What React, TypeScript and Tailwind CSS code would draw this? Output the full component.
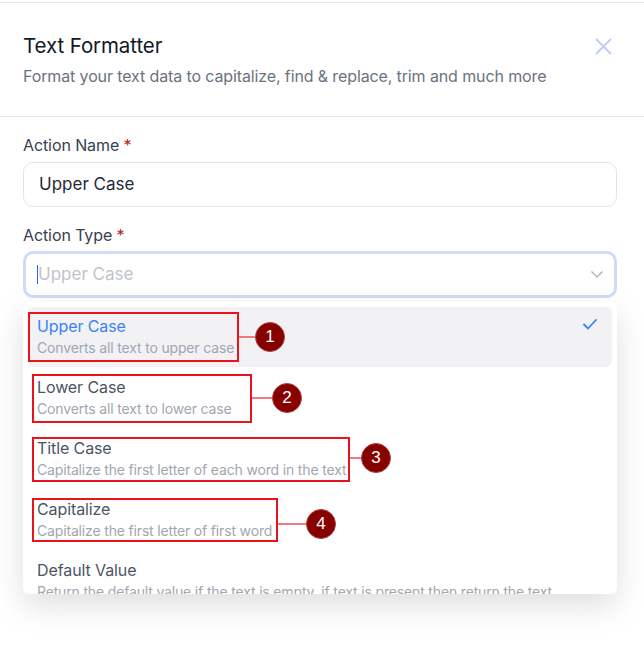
import * as React from 'react';

interface Option {
    title: string;
    description: string;
}

const options: Option[] = [
    { title: 'Upper Case', description: 'Converts all text to upper case' },
    { title: 'Lower Case', description: 'Converts all text to lower case' },
    { title: 'Title Case', description: 'Capitalize the first letter of each word in the text' },
    { title: 'Capitalize', description: 'Capitalize the first letter of first word' },
    { title: 'Default Value', description: 'Return the default value if the text is empty, if text is present then return the text' },
];

// red callouts drawn over the screenshot
const callouts = [
    { n: 1, box: 'left-[28px] top-[312px] w-[211px] h-[50px]', line: 'left-[239px] top-[336px] w-[18px]', dot: 'left-[255px] top-[322px]' },
    { n: 2, box: 'left-[32px] top-[374px] w-[220px] h-[49px]', line: 'left-[252px] top-[397px] w-[22px]', dot: 'left-[272px] top-[383px]' },
    { n: 3, box: 'left-[32px] top-[437px] w-[318px] h-[45px]', line: 'left-[350px] top-[457px] w-[12px]', dot: 'left-[361px] top-[443px]' },
    { n: 4, box: 'left-[32px] top-[498px] w-[246px] h-[44px]', line: 'left-[278px] top-[523px] w-[30px]', dot: 'left-[306px] top-[509px]' },
];

const Check = () => (
    <svg className="block" width="14" height="11" viewBox="0 0 14 11" fill="none">
        <path d="M1 5.5 L5 9.5 L13 1" stroke="#3b82f6" strokeWidth="1.8" strokeLinecap="round" strokeLinejoin="round" />
    </svg>
);

const Chevron = () => (
    <svg className="block" width="12" height="7" viewBox="0 0 12 7" fill="none">
        <path d="M0.5 0.5 L6 6 L11.5 0.5" stroke="#a3a8b2" strokeWidth="1.2" />
    </svg>
);

const Close = () => (
    <svg className="block" width="17" height="17" viewBox="0 0 17 17" fill="none">
        <path d="M1 1 L16 16 M16 1 L1 16" stroke="#c3cdf7" strokeWidth="2" />
    </svg>
);

export default function App() {
    return (
        <div className="relative h-[653px] w-[644px] overflow-hidden bg-white font-['Inter','Liberation_Sans',sans-serif]">
            <div className="mt-[2px] border-t border-[#e7e8eb]">
                <div className="flex items-start justify-between border-b border-[#e5e7eb] pb-[28px] pl-[23px] pr-[27px] pt-[29px]">
                    <div>
                        <h2 className="text-[20.5px] leading-[28px] tracking-[-0.1px] text-[#111827]">Text Formatter</h2>
                        <p className="mt-[4px] text-[16px] leading-[24px] tracking-[-0.12px] text-[#6b7280]">
                            Format your text data to capitalize, find &amp; replace, trim and much more
                        </p>
                    </div>
                    <button className="mr-[5px] mt-[6px]">
                        <Close />
                    </button>
                </div>

                <div className="pl-[23px] pr-[27px] pt-[17px]">
                    <label className="block text-[16px] leading-[22px] tracking-[-0.1px] text-[#374151]">
                        Action Name <span className="text-[#b91c1c]">*</span>
                    </label>
                    <div className="mt-[6px] flex h-[45px] items-center rounded-[10px] border border-[#e3e5ea] px-[15px] text-[17px] text-[#1f2937]">
                        Upper Case
                    </div>

                    <label className="mt-[17px] block text-[16px] leading-[22px] tracking-[-0.1px] text-[#374151]">
                        Action Type <span className="text-[#b91c1c]">*</span>
                    </label>
                    <div className="relative mt-[5px]">
                        <div className="flex h-[47px] items-center rounded-[10px] border-[3px] border-[#cfdcf8] pl-[11px] pr-[11px] text-[17px]">
                            <span className="h-[19px] w-px bg-[#2563eb]" />
                            <span className="flex-1 text-[#c0c4cb]">Upper Case</span>
                            <Chevron />
                        </div>

                        <div className="absolute left-0 right-0 top-full mt-[4px] h-[292px] overflow-hidden rounded-[6px] bg-white p-[5px] shadow-[0_12px_32px_rgba(0,0,0,0.13)]">
                            <div className="flex flex-col gap-px">
                                {options.map((o, i) => (
                                    <div
                                        key={o.title}
                                        className={'flex items-start rounded-[6px] pb-[9px] pl-[9px] pr-[15px] pt-[7px] ' + (i === 0 ? 'bg-[#f2f2f5]' : '')}
                                    >
                                        <div className="flex-1 whitespace-nowrap">
                                            <div className={'text-[16px] leading-[24px] tracking-[-0.1px] ' + (i === 0 ? 'text-[#3b82f6]' : 'text-[#4b5563]')}>
                                                {o.title}
                                            </div>
                                            <div className="text-[14px] leading-[20px] tracking-[-0.16px] text-[#a1a6b1]">{o.description}</div>
                                        </div>
                                        {i === 0 && (
                                            <div className="pt-[5px]">
                                                <Check />
                                            </div>
                                        )}
                                    </div>
                                ))}
                            </div>
                        </div>
                    </div>
                </div>
            </div>

            {callouts.map((c) => (
                <React.Fragment key={c.n}>
                    <div className={'absolute border-2 border-[#e8131b] ' + c.box} />
                    <div className={'absolute h-[2px] bg-[#ee7b80] ' + c.line} />
                    <div className={'absolute flex h-[30px] w-[30px] items-center justify-center rounded-full border border-[#b04040] bg-[#870000] font-["Liberation_Sans",sans-serif] text-[17px] text-white ' + c.dot}>
                        {c.n}
                    </div>
                </React.Fragment>
            ))}
        </div>
    );
}
